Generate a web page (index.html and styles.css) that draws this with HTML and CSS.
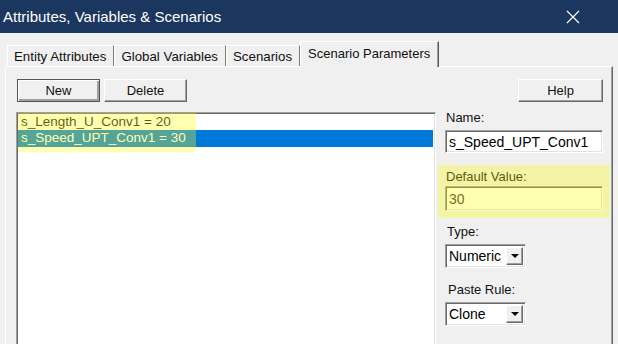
FILE: index.html
```html
<!DOCTYPE html>
<html lang="en">
<head>
    <meta charset="UTF-8">
    <title>Attributes, Variables &amp; Scenarios</title>
    <link rel="stylesheet" href="styles.css">
</head>
<body>
    <div class="window">
        <div class="titlebar">
            <span class="title">Attributes, Variables &amp; Scenarios</span>
            <svg class="close" width="14" height="14" viewBox="0 0 14 14">
                <path d="M1 1 L13 13 M13 1 L1 13" stroke="#fff" stroke-width="1.2" fill="none"/>
            </svg>
        </div>
        <div class="dialog">
            <div class="tabs">
                <div class="tab">Entity Attributes</div>
                <div class="tab">Global Variables</div>
                <div class="tab">Scenarios</div>
                <div class="tab active">Scenario Parameters</div>
            </div>
            <div class="panel">
                <div class="left">
                    <div class="btn-row">
                        <button class="btn btn-default">New</button>
                        <button class="btn">Delete</button>
                    </div>
                    <div class="listbox">
                        <div class="item">s_Length_U_Conv1 = 20</div>
                        <div class="item selected">s_Speed_UPT_Conv1 = 30</div>
                        <div class="mark mark-list"></div>
                    </div>
                </div>
                <div class="right">
                    <button class="btn btn-help">Help</button>
                    <div class="label label-name">Name:</div>
                    <div class="field">s_Speed_UPT_Conv1</div>
                    <div class="marked">
                        <div class="label label-default">Default Value:</div>
                        <div class="field field-value">30</div>
                    </div>
                    <div class="label label-type">Type:</div>
                    <div class="combo">
                        <span class="combo-text">Numeric</span>
                        <span class="combo-btn"><span class="arrow"></span></span>
                    </div>
                    <div class="label label-paste">Paste Rule:</div>
                    <div class="combo">
                        <span class="combo-text">Clone</span>
                        <span class="combo-btn"><span class="arrow"></span></span>
                    </div>
                </div>
            </div>
        </div>
    </div>
</body>
</html>
```

FILE: styles.css
```css
body {
    margin: 0;
    width: 618px;
    height: 344px;
    overflow: hidden;
    font-family: "Liberation Sans", Arial, sans-serif;
    background-color: #f0f0f0;
}
.window {
    width: 618px;
    height: 344px;
    overflow: hidden;
}
.titlebar {
    height: 33px;
    background-color: #1b365f;
    color: #fff;
    display: flex;
    align-items: center;
}
.title {
    font-size: 15px;
    padding-left: 3px;
    padding-bottom: 1px;
}
.close {
    margin-left: auto;
    margin-right: 38px;
}
.dialog {
    background-color: #f0f0f0;
    padding-top: 8px;
}
.tabs {
    display: flex;
    align-items: flex-end;
    height: 25px;
    padding-left: 7px;
}
.tab {
    height: 20px;
    line-height: 21px;
    padding: 0 7px 0 6px;
    font-size: 13.3px;
    color: #111;
    border-top: 1px solid #fff;
    border-left: 1px solid #fff;
    border-right: 1px solid #7a7a7a;
}
.tab.active {
    height: 25px;
    line-height: 23px;
    padding: 0 8px 0 7px;
    margin-bottom: -1px;
    font-size: 13px;
    position: relative;
    background-color: #f0f0f0;
    border-right: 1px solid #5a5a5a;
    box-shadow: inset -1px 0 #a0a0a0;
}
.panel {
    margin-left: 5px;
    width: 608px;
    height: 290px;
    border-top: 1px solid #fff;
    border-left: 1px solid #fff;
    border-right: 1px solid #696969;
    box-shadow: inset -1px 0 #a0a0a0;
    display: flex;
    padding: 12px 0 0 10px;
    box-sizing: border-box;
}
.left {
    width: 420px;
}
.btn-row {
    display: flex;
    gap: 4px;
    padding-left: 1px;
}
.btn {
    width: 83px;
    height: 23px;
    padding: 0;
    font-family: "Liberation Sans", Arial, sans-serif;
    font-size: 13px;
    color: #111;
    background-color: #f0f0f0;
    border: 1px solid;
    border-color: #fff #696969 #696969 #fff;
    box-shadow: inset -1px -1px #a0a0a0;
}
.btn-default {
    border-color: #555;
    box-shadow: inset 1px 1px #fff, inset -2px -2px #a0a0a0;
}
.listbox {
    position: relative;
    margin-top: 10px;
    height: 240px;
    background: #fff;
    border: 1px solid;
    border-color: #a0a0a0 #fff #fff #a0a0a0;
    box-shadow: inset 1px 1px #696969, inset -1px -1px #e3e3e3;
    padding: 1px 2px 0 1px;
}
.item {
    height: 16px;
    line-height: 16px;
    padding-left: 3px;
    font-size: 13.5px;
    color: #111;
    white-space: nowrap;
}
.item.selected {
    background-color: #0078d7;
    color: #fff;
    height: 17px;
}
.mark {
    position: absolute;
    background-color: rgba(255, 255, 20, 0.33);
    pointer-events: none;
}
.mark-list {
    left: 1px;
    top: 0;
    width: 178px;
    height: 39px;
}
.right {
    width: 158px;
    margin-left: 9px;
    display: flex;
    flex-direction: column;
}
.btn-help {
    align-self: flex-end;
    width: 85px;
}
.label {
    font-size: 13px;
    height: 16px;
    line-height: 16px;
    color: #111;
    padding-left: 1px;
}
.label-name {
    margin-top: 8px;
}
.field {
    margin-top: 4px;
    height: 23px;
    line-height: 22px;
    font-size: 14px;
    padding-left: 3px;
    background: #fff;
    border: 1px solid;
    border-color: #a0a0a0 #fff #fff #a0a0a0;
    box-shadow: inset 1px 1px #696969, inset -1px -1px #e3e3e3;
    box-sizing: border-box;
}
.marked {
    position: relative;
    margin: 12px -7px 0 -7px;
    padding: 4px 7px 7px 7px;
}
.marked::after {
    content: "";
    position: absolute;
    inset: 0;
    background-color: rgba(255, 255, 0, 0.3);
}
.label-default {
    margin-top: 0;
}
.field-value {
    margin-top: 1px;
    height: 25px;
    line-height: 24px;
    color: #333;
}
.label-type {
    margin-top: 6px;
    padding-left: 2px;
}
.label-paste {
    margin-top: 14px;
    padding-left: 3px;
}
.combo {
    margin-top: 4px;
    width: 81px;
    height: 24px;
    display: flex;
    align-items: center;
    background: #fff;
    border: 1px solid;
    border-color: #a0a0a0 #fff #fff #a0a0a0;
    box-shadow: inset 1px 1px #696969, inset -1px -1px #e3e3e3;
    box-sizing: border-box;
}
.combo-text {
    font-size: 14px;
    padding-left: 3px;
    flex: 1;
}
.combo-btn {
    width: 17px;
    height: 18px;
    margin-right: 2px;
    background: #f0f0f0;
    border: 1px solid;
    border-color: #fff #696969 #696969 #fff;
    box-shadow: inset -1px -1px #a0a0a0;
    box-sizing: border-box;
    display: flex;
    align-items: center;
    justify-content: center;
}
.arrow {
    width: 0;
    height: 0;
    border-left: 4px solid transparent;
    border-right: 4px solid transparent;
    border-top: 4px solid #000;
}
```
